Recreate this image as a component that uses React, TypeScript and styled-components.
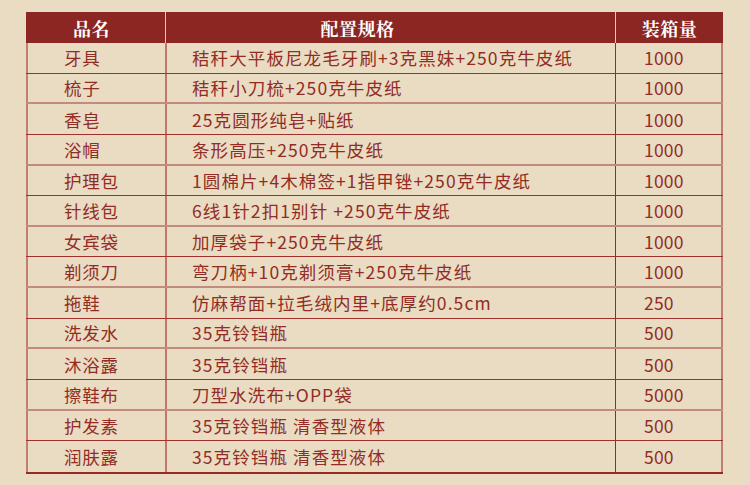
import React from "react";
import styled, { createGlobalStyle } from "styled-components";

const Global = createGlobalStyle`
  html, body { margin: 0; padding: 0; background: #e9dcc3; }
  body { width: 750px; height: 485px; overflow: hidden; }
`;

const Page = styled.div`
  padding: 12px 0 0 26px;
`;

const Table = styled.div`
  width: 697px;
  border-bottom: 2px solid #9c2822;
  box-sizing: border-box;
`;

const cols = "139px 450px 108px";

const HeaderRow = styled.div`
  display: grid;
  grid-template-columns: ${cols};
  height: 31px;
  background: #8c2622;
`;

const HeaderCell = styled.div<{ $pad?: number; $divider?: boolean }>`
  display: flex;
  align-items: center;
  justify-content: center;
  padding-right: ${(p) => p.$pad ?? 0}px;
  border-left: ${(p) => (p.$divider ? "1px solid #e8c8bd" : "none")};
  color: #ffffff;
  font-family: "Noto Serif CJK SC", "Noto Sans CJK SC", serif;
  font-weight: 700;
  font-size: 18px;
  letter-spacing: 0.5px;
`;

const Row = styled.div<{ $alt: boolean }>`
  display: grid;
  grid-template-columns: ${cols};
  height: 30.64px;
  box-sizing: border-box;
  border-bottom: ${(p) => (p.$alt ? "2px solid #c38a7e" : "1px solid #a1302a")};
  &:last-child { border-bottom: none; }
`;

const Cell = styled.div<{ $pad: number; $border: string; $ls: number; $right?: boolean }>`
  display: flex;
  align-items: center;
  padding-left: ${(p) => p.$pad}px;
  border-left: ${(p) => p.$border};
  border-right: ${(p) => (p.$right ? "2px solid #c27e72" : "none")};
  color: #932c25;
  font-family: "Noto Sans CJK SC", "Noto Sans", sans-serif;
  font-size: 17.5px;
  letter-spacing: ${(p) => p.$ls}px;
  white-space: nowrap;
  overflow: hidden;
`;

const rows: [string, string, string][] = [
  ["牙具", "秸秆大平板尼龙毛牙刷+3克黑妹+250克牛皮纸", "1000"],
  ["梳子", "秸秆小刀梳+250克牛皮纸", "1000"],
  ["香皂", "25克圆形纯皂+贴纸", "1000"],
  ["浴帽", "条形高压+250克牛皮纸", "1000"],
  ["护理包", "1圆棉片+4木棉签+1指甲锉+250克牛皮纸", "1000"],
  ["针线包", "6线1针2扣1别针 +250克牛皮纸", "1000"],
  ["女宾袋", "加厚袋子+250克牛皮纸", "1000"],
  ["剃须刀", "弯刀柄+10克剃须膏+250克牛皮纸", "1000"],
  ["拖鞋", "仿麻帮面+拉毛绒内里+底厚约0.5cm", "250"],
  ["洗发水", "35克铃铛瓶", "500"],
  ["沐浴露", "35克铃铛瓶", "500"],
  ["擦鞋布", "刀型水洗布+OPP袋", "5000"],
  ["护发素", "35克铃铛瓶 清香型液体", "500"],
  ["润肤露", "35克铃铛瓶 清香型液体", "500"],
];

export default function App() {
  return (
    <>
      <Global />
      <Page>
        <Table>
          <HeaderRow>
            <HeaderCell $pad={8}>品名</HeaderCell>
            <HeaderCell $pad={66} $divider>配置规格</HeaderCell>
            <HeaderCell $divider>装箱量</HeaderCell>
          </HeaderRow>
          {rows.map((r, i) => (
            <Row key={i} $alt={i % 2 === 1}>
              <Cell $pad={36} $ls={0.8} $border="2px solid #c27e72">{r[0]}</Cell>
              <Cell $pad={25} $ls={1.1} $border="2px solid #c4766a">{r[1]}</Cell>
              <Cell $pad={28} $ls={0.2} $border="1px solid #9c2822" $right>{r[2]}</Cell>
            </Row>
          ))}
        </Table>
      </Page>
    </>
  );
}
